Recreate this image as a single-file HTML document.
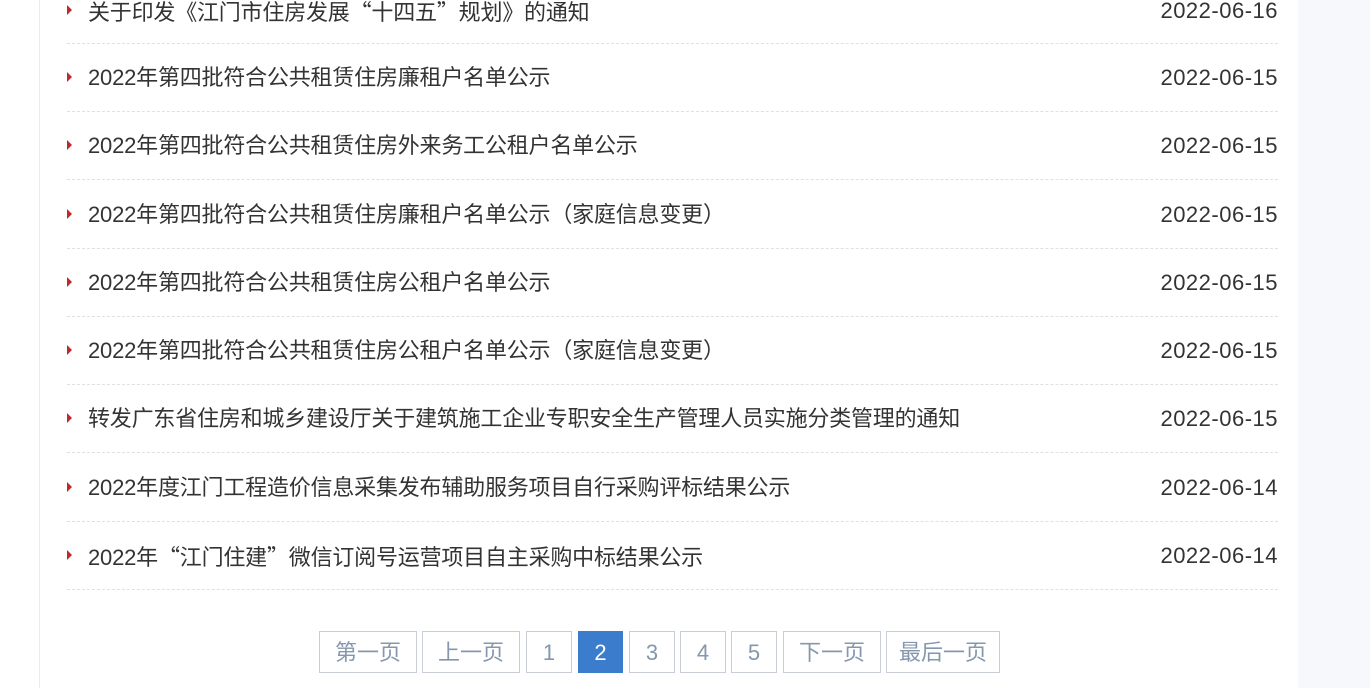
<!DOCTYPE html>
<html><head><meta charset="utf-8"><style>
body{margin:0;width:1370px;height:688px;overflow:hidden;background:#f7f8fb;font-family:"Liberation Sans","Noto Sans CJK SC",sans-serif;position:relative}
.main{position:absolute;left:0;top:0;width:1298px;height:688px;background:#fff}
.vl{position:absolute;left:39px;top:0;width:1px;height:688px;background:#ececec}
.row{position:absolute;left:67px;width:1211px;height:68px;border-bottom:1px dashed #e0e0e0}
.row .t{position:absolute;left:21px;font-size:22px;color:#333;white-space:nowrap;line-height:28px;letter-spacing:-0.2px}
.row .d{position:absolute;right:0;font-size:22px;color:#333;line-height:28px;letter-spacing:0.5px}
.q{font-family:"Noto Sans CJK SC",sans-serif}
.row .a{position:absolute;left:0;width:0;height:0;border-left:5px solid #c0282a;border-top:5px solid transparent;border-bottom:5px solid transparent}
.pg{position:absolute;top:631px;border:1px solid #c9ced6;box-sizing:border-box;height:42px;color:#8497ad;font-size:22px;text-align:center;line-height:42px;background:#fff}
.pg.on{background:#3b7dcc;color:#fff;border-color:#3b7dcc}
</style></head><body>
<div class="main"></div><div class="vl"></div>
<div class="row" style="top:-25px"><span class="a" style="top:30px"></span><span class="t" style="top:22px">关于印发《江门市住房发展<span class="q">“</span>十四五<span class="q">”</span>规划》的通知</span><span class="d" style="top:22px">2022-06-16</span></div>
<div class="row" style="top:43px"><span class="a" style="top:29px"></span><span class="t" style="top:21px">2022年第四批符合公共租赁住房廉租户名单公示</span><span class="d" style="top:21px">2022-06-15</span></div>
<div class="row" style="top:111px"><span class="a" style="top:29px"></span><span class="t" style="top:21px">2022年第四批符合公共租赁住房外来务工公租户名单公示</span><span class="d" style="top:21px">2022-06-15</span></div>
<div class="row" style="top:180px"><span class="a" style="top:29px"></span><span class="t" style="top:21px">2022年第四批符合公共租赁住房廉租户名单公示（家庭信息变更）</span><span class="d" style="top:21px">2022-06-15</span></div>
<div class="row" style="top:248px"><span class="a" style="top:29px"></span><span class="t" style="top:21px">2022年第四批符合公共租赁住房公租户名单公示</span><span class="d" style="top:21px">2022-06-15</span></div>
<div class="row" style="top:316px"><span class="a" style="top:29px"></span><span class="t" style="top:21px">2022年第四批符合公共租赁住房公租户名单公示（家庭信息变更）</span><span class="d" style="top:21px">2022-06-15</span></div>
<div class="row" style="top:384px"><span class="a" style="top:29px"></span><span class="t" style="top:21px">转发广东省住房和城乡建设厅关于建筑施工企业专职安全生产管理人员实施分类管理的通知</span><span class="d" style="top:21px">2022-06-15</span></div>
<div class="row" style="top:453px"><span class="a" style="top:29px"></span><span class="t" style="top:21px">2022年度江门工程造价信息采集发布辅助服务项目自行采购评标结果公示</span><span class="d" style="top:21px">2022-06-14</span></div>
<div class="row" style="top:521px"><span class="a" style="top:29px"></span><span class="t" style="top:21px">2022年<span class="q">“</span>江门住建<span class="q">”</span>微信订阅号运营项目自主采购中标结果公示</span><span class="d" style="top:21px">2022-06-14</span></div>
<div class="pg" style="left:319px;width:98px">第一页</div>
<div class="pg" style="left:422px;width:98px">上一页</div>
<div class="pg" style="left:526px;width:46px">1</div>
<div class="pg on" style="left:578px;width:45px">2</div>
<div class="pg" style="left:629px;width:46px">3</div>
<div class="pg" style="left:680px;width:46px">4</div>
<div class="pg" style="left:731px;width:46px">5</div>
<div class="pg" style="left:783px;width:98px">下一页</div>
<div class="pg" style="left:886px;width:114px">最后一页</div>
</body></html>
